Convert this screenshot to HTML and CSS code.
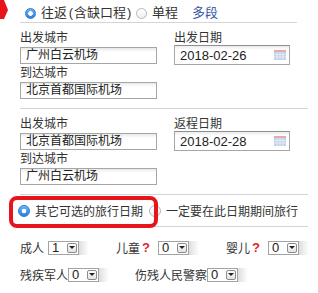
FILE: index.html
```html
<!doctype html>
<html lang="zh-CN">

<head>
    <meta charset="utf-8">
    <title>航班查询</title>
    <meta name="viewport" content="width=device-width, initial-scale=1">
    <link rel="stylesheet" href="styles.css">
</head>

<body>
    <svg class="pointer" width="9" height="20" viewBox="0 0 9 20">
        <polygon points="0,0 4,0 8,10 4,19 0,19" fill="#e8141c" />
    </svg>

    <div class="booking">
        <div class="trip-type">
            <label class="radio"><span class="dot dot--on"></span>往返<span class="paren paren--open">(</span>含缺口程<span class="paren paren--close">)</span></label>
            <label class="radio"><span class="dot"></span>单程</label>
            <a class="trip-type__link" href="javascript:void(0)">多段</a>
        </div>

        <div class="leg">
            <div class="leg__city">
                <div class="lbl">出发城市</div>
                <div class="field">广州白云机场</div>
                <div class="lbl">到达城市</div>
                <div class="field">北京首都国际机场</div>
            </div>
            <div class="leg__date">
                <div class="lbl">出发日期</div>
                <div class="date">
                    <span>2018-02-26</span>
                    <svg class="cal" width="12" height="10" viewBox="0 0 12 10">
                        <rect x="0" y="0" width="12" height="10" fill="#b9cde4" />
                        <rect x="0" y="0" width="12" height="2" fill="#e3a3a3" />
                        <path d="M0 4.5H12M0 7H12M3 2V10M6 2V10M9 2V10" stroke="#e8eff7" stroke-width="0.8" />
                    </svg>
                </div>
            </div>
        </div>

        <div class="leg">
            <div class="leg__city">
                <div class="lbl">出发城市</div>
                <div class="field">北京首都国际机场</div>
                <div class="lbl">到达城市</div>
                <div class="field">广州白云机场</div>
            </div>
            <div class="leg__date">
                <div class="lbl">返程日期</div>
                <div class="date">
                    <span>2018-02-28</span>
                    <svg class="cal" width="12" height="10" viewBox="0 0 12 10">
                        <rect x="0" y="0" width="12" height="10" fill="#b9cde4" />
                        <rect x="0" y="0" width="12" height="2" fill="#e3a3a3" />
                        <path d="M0 4.5H12M0 7H12M3 2V10M6 2V10M9 2V10" stroke="#e8eff7" stroke-width="0.8" />
                    </svg>
                </div>
            </div>
        </div>

        <div class="flex-dates">
            <span class="highlight"></span>
            <label class="radio"><span class="dot dot--on"></span>其它可选的旅行日期</label>
            <label class="radio"><span class="dot"></span>一定要在此日期期间旅行</label>
        </div>

        <div class="pax">
            <div class="pax__row">
                <div class="pax__cell pax__cell--adult">
                    成人
                    <span class="pick"><span class="sel"><span class="sel__val">1</span><span class="sel__btn"></span></span></span>
                </div>
                <div class="pax__cell pax__cell--child">
                    儿童<span class="help">?</span>
                    <span class="pick"><span class="sel"><span class="sel__val">0</span><span class="sel__btn"></span></span></span>
                </div>
                <div class="pax__cell">
                    婴儿<span class="help">?</span>
                    <span class="pick"><span class="sel"><span class="sel__val">0</span><span class="sel__btn"></span></span></span>
                </div>
            </div>
            <div class="pax__row">
                <div class="pax__cell pax__cell--veteran">
                    残疾军人<span class="pick pick--tight"><span class="sel"><span class="sel__val">0</span><span class="sel__btn"></span></span></span>
                </div>
                <div class="pax__cell">
                    伤残人民警察<span class="pick pick--tight"><span class="sel"><span class="sel__val">0</span><span class="sel__btn"></span></span></span>
                </div>
            </div>
        </div>
    </div>
</body>

</html>
```

FILE: styles.css
```css
* {
    padding: 0;
    margin: 0;
    box-sizing: border-box;
}

body {
    width: 318px;
    height: 293px;
    background: #fff;
    color: #333;
    font-family: "Liberation Sans", "Noto Sans CJK SC", sans-serif;
    font-size: 12px;
    position: relative;
    overflow: hidden;
}

.pointer {
    position: absolute;
    top: 0;
    left: 0;
}

.booking {
    padding-left: 20px;
}

/* radios */
.radio {
    display: inline-flex;
    align-items: center;
    white-space: nowrap;
}

.dot {
    display: inline-block;
    width: 12px;
    height: 12px;
    border-radius: 50%;
    border: 1px solid #b8b8b8;
    background: linear-gradient(#fff, #eee);
    margin-right: 5px;
}

.dot--on {
    border-color: #2d7ad6;
    background: radial-gradient(circle, #fff 0, #fff 2px, transparent 2.6px), linear-gradient(#6bb2f8, #2d80e2);
}

.trip-type {
    width: 277px;
    display: flex;
    align-items: center;
    padding: 5px 0 1px 5px;
    line-height: 16px;
    font-size: 13px;
    border-bottom: 1px solid #d4d4d4;
}

.trip-type .radio {
    margin-right: 3px;
}

.trip-type .dot {
    width: 11px;
    height: 11px;
}

.paren {
    display: inline-block;
    width: 7px;
}

.paren--open {
    text-align: right;
    padding-right: 1px;
}

.paren--close {
    padding-left: 1px;
}

.trip-type__link {
    margin-left: 11px;
    color: #3557a6;
    text-decoration: none;
}

/* legs */
.leg {
    width: 288px;
    display: flex;
    gap: 17px;
    padding: 8px 0 7px;
    border-bottom: 1px solid #d4d4d4;
}

.leg__city {
    width: 137px;
}

.leg__date {
    width: 116px;
}

.lbl {
    line-height: 14px;
    margin-bottom: 2px;
}

.field {
    height: 17px;
    line-height: 15px;
    padding-left: 5px;
    border: 1px solid #a6a6a6;
    background: linear-gradient(#e9e9e9, #fff 4px);
    margin-bottom: 2px;
    color: #222;
}

.date {
    display: flex;
    align-items: center;
    justify-content: space-between;
    height: 20px;
    margin-top: -2px;
    padding: 0 3px 0 5px;
    border: 1px solid #a6a6a6;
    border-top-color: #8f8f8f;
    background: linear-gradient(#ececec, #fff 4px);
    font-size: 13px;
    color: #222;
}

.cal {
    opacity: 0.9;
}

/* flexible dates */
.flex-dates {
    position: relative;
    width: 290px;
    height: 32px;
    margin-left: -2px;
    display: flex;
    align-items: center;
    border-bottom: 1px solid #d4d4d4;
}

.flex-dates .radio {
    margin-right: 6px;
}

.highlight {
    position: absolute;
    left: -9px;
    top: 1px;
    width: 149px;
    height: 32px;
    border: 4px solid #e8141c;
    border-radius: 8px;
    z-index: 1;
}

/* passengers */
.pax {
    padding-top: 7px;
}

.pax__row {
    display: flex;
    align-items: center;
    height: 27px;
}

.pax__cell {
    display: flex;
    align-items: center;
    white-space: nowrap;
}

.pax__cell--adult {
    width: 96px;
}

.pax__cell--child {
    width: 110px;
}

.pax__cell--veteran {
    width: 115px;
}

.help {
    color: #e2242b;
    font-weight: bold;
    font-size: 13px;
    margin: 0 8px 0 2px;
}

.pick {
    display: inline-flex;
    margin-left: 4px;
    padding-right: 10px;
    background: linear-gradient(to right, #dedede, rgba(255, 255, 255, 0)) right center / 10px 14px no-repeat;
}

.pick--tight {
    margin-left: 0;
}

.help + .pick {
    margin-left: 0;
}

.sel {
    display: inline-flex;
    align-items: center;
    width: 31px;
    height: 14px;
    border: 1px solid #a3a3a3;
    background: #fff;
}

.sel__val {
    flex: 1;
    padding-left: 3px;
    font-size: 13px;
    line-height: 12px;
    color: #222;
}

.sel__btn {
    position: relative;
    width: 10px;
    height: 10px;
    margin-right: 1px;
    border: 1px solid #8c8c8c;
    border-radius: 2px;
    background: linear-gradient(#fff, #e2e2e2);
}

.sel__btn:after {
    content: "";
    position: absolute;
    left: 1px;
    top: 2px;
    border-left: 3px solid transparent;
    border-right: 3px solid transparent;
    border-top: 3px solid #222;
}
```
